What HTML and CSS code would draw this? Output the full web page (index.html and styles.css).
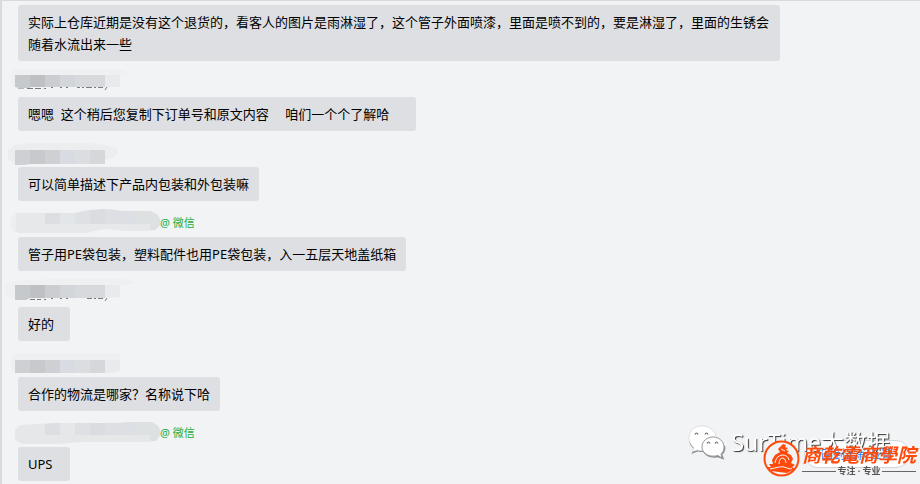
FILE: index.html
```html
<!DOCTYPE html>
<html lang="zh-CN">
<head>
    <meta charset="UTF-8">
    <meta name="viewport" content="width=device-width, initial-scale=1.0">
    <title>聊天记录</title>
    <link rel="stylesheet" href="styles.css">
</head>
<body>

<main class="chat">
    <div class="message">
        <p class="bubble">实际上仓库近期是没有这个退货的，看客人的图片是雨淋湿了，这个管子外面喷漆，里面是喷不到的，要是淋湿了，里面的生锈会随着水流出来一些</p>
    </div>

    <div class="message">
        <div class="sender">
            <svg class="mask" viewBox="2 0 158 36" aria-hidden="true">
                <path d="M15 8H120L127 11V13L120 15V26H15L11 22V12Z" fill="#eff0f2"/>
                <path d="M15 14H30V27H19L15 26Z" fill="#c6c9cc"/>
                <path d="M30 14H45V26H30Z" fill="#bfc0c4"/>
                <path d="M45 14H60V26H45Z" fill="#cccdd1"/>
                <path d="M60 14H75V26H60Z" fill="#d2d5da"/>
                <path d="M75 14H105V26H75Z" fill="#d8d9dc"/>
                <path d="M105 14H120V26H105Z" fill="#e9eaee"/>
                <path d="M18 27.5h6" stroke="#b9bcc0"/>
                <path d="M27 27.5h6M35 27.5h6M44 27.5h2M51 26.5h2M60 26.5h2M66 26.5h2M77 26.5h3M82 26.5h2M86 26.5h6M94 26.5h2M98 26.5h5" stroke="#777b82"/>
                <path d="M107 26l-2 3" stroke="#777b82" fill="none"/>
            </svg>
        </div>
        <p class="bubble">嗯嗯&nbsp; 这个稍后您复制下订单号和原文内容&emsp; 咱们一个个了解哈&emsp;&nbsp;</p>
    </div>

    <div class="message">
        <div class="sender">
            <svg class="mask" viewBox="2 0 158 36" aria-hidden="true">
                <path d="M15 14L30 12H90L105 14L116 17L118 21L113 27L105 29V33H25L15 34L8 28V19Z" fill="#ecedef"/>
                <path d="M15 19H30V33L24 34H15Z" fill="#cfd0d3"/>
                <path d="M30 19H45V33H30Z" fill="#c8c9cd"/>
                <path d="M45 19H60V33H45Z" fill="#cfd0d3"/>
                <path d="M60 19H75V33H60Z" fill="#d8dbe1"/>
                <path d="M75 19H90V33H75Z" fill="#dcdde0"/>
                <path d="M90 19H105V33H90Z" fill="#d6d7db"/>
            </svg>
        </div>
        <p class="bubble">可以简单描述下产品内包装和外包装嘛</p>
    </div>

    <div class="message">
        <div class="sender">
            <svg class="mask" viewBox="2 0 158 36" aria-hidden="true">
                <path d="M16 12H75L90 9L110 8L122 10H150L157 13L160 18V24L155 29L148 30H125L105 28L85 32H18L11 27V17Z" fill="#e7e8ea"/>
                <path d="M11 17L16 12V32L11 27Z" fill="#edeef0"/>
                <path d="M45 12H60V23H45Z" fill="#dddee2"/>
                <path d="M60 12H75V23H60Z" fill="#e2e6e8"/>
                <path d="M75 12L90 9V23H75Z" fill="#dfe0e3"/>
                <path d="M90 9L105 8V23H90Z" fill="#d9dce1"/>
                <path d="M105 8L120 10V23H105Z" fill="#dedfe2"/>
                <path d="M120 10H135V23H120Z" fill="#dcdfe3"/>
                <path d="M135 10H150L157 13L160 18V24L155 29H150V23H135Z" fill="#dde1e1"/>
            </svg>
            <span class="from">@ 微信</span>
        </div>
        <p class="bubble">管子用PE袋包装，塑料配件也用PE袋包装，入一五层天地盖纸箱</p>
    </div>

    <div class="message">
        <div class="sender">
            <svg class="mask" viewBox="2 0 158 36" aria-hidden="true">
                <path d="M12 10L45 8H125L134 10V12L120 15V27H15L8 26L5 21V14Z" fill="#eff0f2"/>
                <path d="M15 14H30V27L26 29H15Z" fill="#c6c9cc"/>
                <path d="M30 14H45V27H30Z" fill="#bfc0c4"/>
                <path d="M45 14H60V27H45Z" fill="#cccdd1"/>
                <path d="M60 14H75V27H60Z" fill="#d2d5da"/>
                <path d="M75 14H105V27H75Z" fill="#d8d9dc"/>
                <path d="M105 14H120V26H105Z" fill="#e9eaee"/>
                <path d="M30 28.5h5M37 28.5h4M44 28.5h2M51 27.5h2M60 27.5h2M66 27.5h2M87 27.5h5M94 27.5h2M98 27.5h5" stroke="#777b82"/>
                <path d="M107 27l-2 3" stroke="#777b82" fill="none"/>
            </svg>
        </div>
        <p class="bubble">好的</p>
    </div>

    <div class="message">
        <div class="sender">
            <svg class="mask" viewBox="2 0 158 36" aria-hidden="true">
                <path d="M17 12H120V30L108 32H15L11 27V17Z" fill="#eeeff1"/>
                <path d="M15 19H30V32H15Z" fill="#cfd0d3"/>
                <path d="M30 19H45V32H30Z" fill="#c8c9cd"/>
                <path d="M45 19H60V32H45Z" fill="#cfd0d3"/>
                <path d="M60 19H75V32H60Z" fill="#d8dbe1"/>
                <path d="M75 19H90V32H75Z" fill="#dcdde0"/>
                <path d="M90 19H105V32H90Z" fill="#d6d7db"/>
                <path d="M105 19H120V30L108 32H105Z" fill="#e9eaee"/>
            </svg>
        </div>
        <p class="bubble">合作的物流是哪家？名称说下哈</p>
    </div>

    <div class="message">
        <div class="sender">
            <svg class="mask" viewBox="2 0 158 36" aria-hidden="true">
                <path d="M20 14L55 12H115L130 11H152L158 15L160 19V24L156 30L148 31H80L60 33H22L15 29V19Z" fill="#e6e7e9"/>
                <path d="M45 13L60 12V24H45Z" fill="#dddee2"/>
                <path d="M75 12H90V24H75Z" fill="#dfe0e3"/>
                <path d="M90 12H105V24H90Z" fill="#d9dce1"/>
                <path d="M105 12H120V24H105Z" fill="#dedfe2"/>
                <path d="M120 12L135 11V24H120Z" fill="#dcdfe3"/>
                <path d="M135 11H152L158 15L160 19V24L156 30H150V24H135Z" fill="#dde1e1"/>
            </svg>
            <span class="from">@ 微信</span>
        </div>
        <p class="bubble">UPS</p>
    </div>
</main>

<button type="button" class="latest">回到最新位置</button>

<!-- WeChat account mark -->
<div class="watermark">
    <svg class="wechat" width="40" height="36" viewBox="0 0 40 36" aria-hidden="true">
        <g fill="none" stroke="#8b8c8e" stroke-width="1.500">
            <path d="M3 18C4 21 5 23 8 24.500L6 28.500L11 26.500C13 27.500 15 27.500 18 27"/>
            <path d="M16 25C17 31 23 34 31 32.500L36 34.500L34.500 30.500C37 28.500 38 26 37.500 22"/>
        </g>
        <g fill="#fff" stroke="#c4c5c7" stroke-width="0.500">
            <path d="M15 2C7 2 2 7 2 14C2 18 4 21 7 24L5 28L10 26C12 27 15 27 18 26.500L29 14C29 7 23 2 15 2Z"/>
            <path d="M26 13C32 13 37 17.500 37 23C37 26 36 28 34 30L35 34L31 31.500C22 34 15 29 15 23C15 17 20 13 26 13Z" stroke="#98999b" stroke-width="1"/>
        </g>
        <g fill="none" stroke="#66676a" stroke-width="1.200">
            <path d="M8 10.500q1.500-3 3 0M18 10.500q1.500-3 3 0M20 19.500q1.500-3 3 0M28 19.500q1.500-3 3 0"/>
        </g>
    </svg>
    <span>SurTime大数据</span>
</div>

<!-- School logo -->
<div class="school">
    <svg width="37" height="37" viewBox="0 0 37 37" aria-hidden="true">
        <circle cx="18.500" cy="18.500" r="17" fill="#f2f3f5" stroke="#ff4a0c" stroke-width="2"/>
        <g fill="#ff4a0c">
            <path d="M17 7L20 4L23 5L22 7L25 8L23 10L26 11L24 13L28 15L30 19L28 23L32 25L29 27L32 29L24 33L8 31L4 27L8 27L6 24L10 24L9 20L12 15L17 12L15 9Z"/>
        </g>
        <g fill="none" stroke="#f2f3f5">
            <path d="M12 23Q13 16 19 15Q25 15 26 20"/>
            <path d="M16 24Q16 18 20 18Q23 19 23 23"/>
            <path d="M18 9l4 2M7 29q5-1 9-2t8 1 5 0"/>
        </g>
    </svg>
    <div class="school-text">
        <strong class="school-name">商乾電商學院</strong>
        <small class="slogan">专注 · 专业</small>
    </div>
</div>

</body>
</html>
```
FILE: styles.css
```css
body {
    margin: 0;
    background-color: #f2f3f5;
    font-family: "Noto Sans", "Noto Sans CJK SC", sans-serif;
    font-size: 13px;
    line-height: 22px;
    color: #000;
}

.chat {
    box-sizing: border-box;
    min-height: 100vh;
    border-top: 1px solid #d9dadd;
    border-left: 2px solid #d9dadd;
    padding: 4px 140px 0 0;
}

.bubble {
    width: fit-content;
    min-width: 52px;
    box-sizing: border-box;
    margin: 0 0 0 16px;
    padding: 6px 10px;
    border-radius: 3px;
    background-color: #dedfe3;
}

.sender {
    display: flex;
    height: 36px;
}

.mask {
    width: 158px;
    height: 36px;
}

.from {
    padding-top: 11px;
    font-size: 11px;
    color: #22ac38;
}

.latest {
    position: fixed;
    right: 10px;
    bottom: 16px;
    height: 28px;
    padding: 0 16px;
    border: 1px solid #d4d5d8;
    border-radius: 14px;
    background-color: #fff;
    color: #0a84ff;
    font-family: inherit;
    font-size: 12px;
    cursor: pointer;
}

.watermark {
    position: fixed;
    right: 30px;
    bottom: 24px;
    display: flex;
    align-items: center;
    gap: 4px;
    color: #fff;
    font-size: 23px;
    line-height: 36px;
    text-shadow: 1px 1px 1px #333;
}

.school {
    position: fixed;
    right: 4px;
    bottom: 7px;
    display: flex;
    gap: 2px;
}

.school-text {
    display: flex;
    flex-direction: column;
    padding-top: 2px;
}

.school-name {
    color: #ff4a0c;
    font-family: "Noto Sans CJK TC", sans-serif;
    font-size: 19px;
    font-style: italic;
    font-weight: bold;
    line-height: 24px;
}

.slogan {
    display: flex;
    align-items: center;
    gap: 1px;
    color: #555;
    font-size: 9px;
    font-weight: bold;
    line-height: 10px;
}

.slogan::before,
.slogan::after {
    content: "";
    flex: 1;
    height: 1px;
    background-color: #666;
}
```
